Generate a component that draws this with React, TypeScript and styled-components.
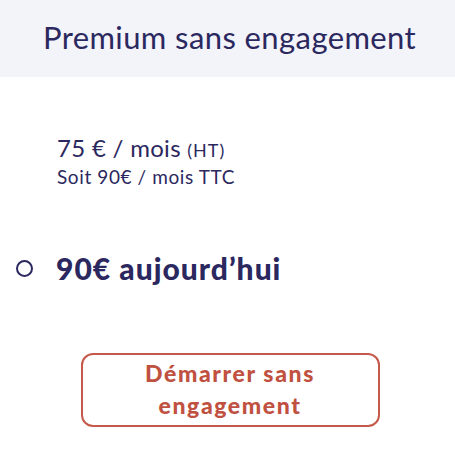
import styled, { createGlobalStyle } from 'styled-components';

const GlobalStyle = createGlobalStyle`
  body {
    margin: 0;
    background: #ffffff;
    font-family: Lato, "Noto Sans", sans-serif;
  }
`;

const App = (): JSX.Element => {
  return (
    <>
      <GlobalStyle />
      <Card>
        <Header>
          <Title>Premium sans engagement</Title>
        </Header>
        <PriceBlock>
          <MainPrice>
            75 € / mois <Small>(HT)</Small>
          </MainPrice>
          <SubPrice>Soit 90€ / mois TTC</SubPrice>
        </PriceBlock>
        <Option>
          <Radio aria-label="Choisir" />
          <OptionLabel>90€ aujourd’hui</OptionLabel>
        </Option>
        <Actions>
          <StartButton>Démarrer sans engagement</StartButton>
        </Actions>
      </Card>
    </>
  );
};

const Card = styled.div`
  width: 455px;
  height: 463px;
  display: flex;
  flex-direction: column;
  color: #2b2860;
`;

const Header = styled.div`
  box-sizing: border-box;
  height: 77px;
  padding: 0 0 4px 4px;
  background: #f3f3fa;
  display: flex;
  align-items: center;
  justify-content: center;
`;

const Title = styled.h1`
  margin: 0;
  font-size: 31px;
  font-weight: 400;
  color: #2b2860;
  letter-spacing: 0.4px;
`;

const PriceBlock = styled.div`
  padding: 56px 0 0 57px;
  display: flex;
  flex-direction: column;
  gap: 1px;
`;

const MainPrice = styled.p`
  margin: 0;
  font-size: 24px;
  line-height: 29px;
  letter-spacing: 0.3px;
`;

const Small = styled.span`
  font-size: 18px;
  letter-spacing: 1px;
`;

const SubPrice = styled.p`
  margin: 0;
  font-size: 19px;
  line-height: 22px;
  letter-spacing: 0.6px;
`;

const Option = styled.div`
  display: flex;
  align-items: center;
  gap: 23px;
  padding: 63px 0 0 16px;
`;

const Radio = styled.span`
  box-sizing: border-box;
  width: 17px;
  height: 17px;
  border: 2.5px solid #2b2860;
  border-radius: 50%;
`;

const OptionLabel = styled.span`
  font-size: 30px;
  font-weight: 900;
  line-height: 34px;
  letter-spacing: 1px;
`;

const Actions = styled.div`
  display: flex;
  justify-content: center;
  padding: 68px 0 0 5px;
`;

const StartButton = styled.button`
  box-sizing: border-box;
  width: 299px;
  height: 74px;
  background: #ffffff;
  border: 2px solid #c65a4a;
  border-radius: 12px;
  color: #c0503f;
  font-family: Lato, "Noto Sans", sans-serif;
  font-size: 23px;
  font-weight: 900;
  line-height: 32px;
  letter-spacing: 1.6px;
  padding: 0 40px 2px;
`;

export default App;
